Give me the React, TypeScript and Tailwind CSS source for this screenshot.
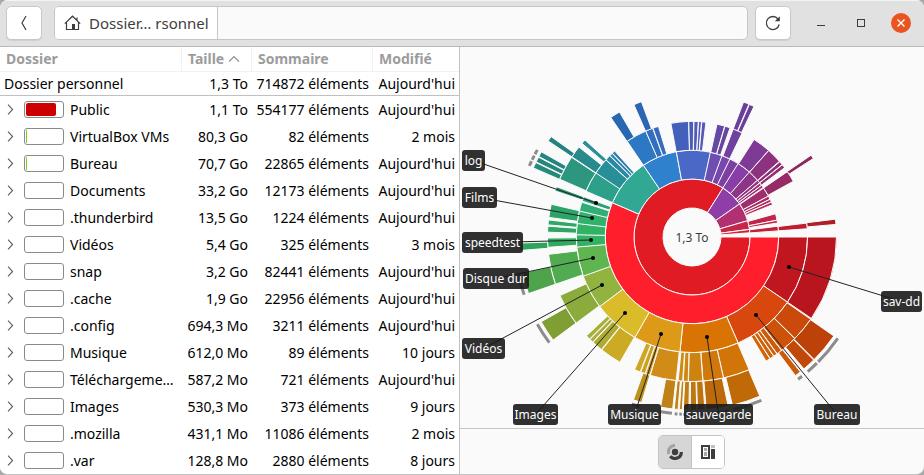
import React from "react";

type Row = { name: string; size: string; count: string; date: string; fill?: string };

const rows: Row[] = [
  { name: "Public", size: "1,1 To", count: "554177 éléments", date: "Aujourd'hui", fill: "w-[30px] bg-[#cc0000]" },
  { name: "VirtualBox VMs", size: "80,3 Go", count: "82 éléments", date: "2 mois", fill: "w-px bg-[#73d216]" },
  { name: "Bureau", size: "70,7 Go", count: "22865 éléments", date: "Aujourd'hui", fill: "w-px bg-[#73d216]" },
  { name: "Documents", size: "33,2 Go", count: "12173 éléments", date: "Aujourd'hui" },
  { name: ".thunderbird", size: "13,5 Go", count: "1224 éléments", date: "Aujourd'hui" },
  { name: "Vidéos", size: "5,4 Go", count: "325 éléments", date: "3 mois" },
  { name: "snap", size: "3,2 Go", count: "82441 éléments", date: "Aujourd'hui" },
  { name: ".cache", size: "1,9 Go", count: "22956 éléments", date: "Aujourd'hui" },
  { name: ".config", size: "694,3 Mo", count: "3211 éléments", date: "Aujourd'hui" },
  { name: "Musique", size: "612,0 Mo", count: "89 éléments", date: "10 jours" },
  { name: "Téléchargeme…", size: "587,2 Mo", count: "721 éléments", date: "Aujourd'hui" },
  { name: "Images", size: "530,3 Mo", count: "373 éléments", date: "9 jours" },
  { name: ".mozilla", size: "431,1 Mo", count: "11086 éléments", date: "2 mois" },
  { name: ".var", size: "128,8 Mo", count: "2880 éléments", date: "8 jours" },
];

const radii = [29, 58, 86.7, 115.6, 144.5, 173];

// [ring, start angle, end angle, colour]; angles run clockwise from east
const sectors: [number, number, number, string][] = [
  [0, 0, 302.3, "#e01b24"],
  [0, 302.3, 325.2, "#8e3ea6"],
  [0, 325.2, 343.7, "#b13071"],
  [0, 343.7, 352.3, "#c62648"],
  [0, 352.5, 355.8, "#d9203a"],

  [1, 0, 203.3, "#ff1f2c"],
  [1, 203.3, 235.9, "#30a893"],
  [1, 235.9, 259.6, "#3081cd"],
  [1, 259.6, 282.4, "#4a69c6"],
  [1, 282.4, 290.4, "#6d4fb3"],
  [1, 290.4, 296.1, "#7747ab"],
  [1, 296.1, 302.3, "#7d40a2"],
  [1, 302.3, 311.6, "#883ea6"],
  [1, 311.6, 319, "#8e3588"],
  [1, 319.3, 321.2, "#96327f"],
  [1, 321.6, 323.2, "#9a3079"],
  [1, 323.6, 325, "#9d2f74"],
  [1, 325.8, 331.7, "#a02d6e"],
  [1, 332, 334, "#ac2a63"],
  [1, 334.4, 336, "#b02960"],
  [1, 336.4, 338, "#b9275a"],
  [1, 344.6, 348.6, "#c1244a"],
  [1, 349, 350.5, "#c22346"],
  [1, 353, 355.8, "#c32038"],

  [2, 0, 34.3, "#c01620"],
  [2, 34.3, 66.5, "#d8470e"],
  [2, 66.5, 96, "#d97404"],
  [2, 96, 119.6, "#dd9a18"],
  [2, 119.6, 143, "#dabb29"],
  [2, 143, 160.3, "#93b340"],
  [2, 160.3, 175.1, "#5fb651"],
  [2, 175.1, 181.2, "#33b164"],
  [2, 181.2, 186.8, "#31b366"],
  [2, 186.8, 193.1, "#31b16c"],
  [2, 193.1, 197.4, "#2fae75"],
  [2, 198.2, 200.3, "#2a9f78"],
  [2, 203.5, 213.8, "#2da089"],
  [2, 213.8, 221.7, "#288f99"],
  [2, 222, 224.5, "#2a89a5"],
  [2, 224.9, 226.2, "#2b83ac"],
  [2, 226.6, 227.9, "#2c7fb1"],
  [2, 236, 246.3, "#2d78c2"],
  [2, 246.5, 250, "#326fbf"],
  [2, 250.4, 253, "#386bbf"],
  [2, 259.6, 268.2, "#4560bb"],
  [2, 268.5, 270.7, "#4b5cb8"],
  [2, 271.1, 273, "#505bb8"],
  [2, 273.4, 274.6, "#535ab7"],
  [2, 275, 276.8, "#5558b5"],
  [2, 282.6, 286.3, "#6549a5"],
  [2, 286.7, 289.1, "#68469f"],
  [2, 291, 295.6, "#6e439f"],
  [2, 302.6, 311.4, "#7e3a95"],
  [2, 311.7, 319, "#8c3281"],
  [2, 319.5, 321.1, "#912e74"],
  [2, 321.5, 323.1, "#962c6f"],
  [2, 325.7, 331.1, "#962b67"],
  [2, 353.2, 355.8, "#be1e31"],

  [3, 0, 34.3, "#b9151f"],
  [3, 34.8, 44.5, "#cb4a0b"],
  [3, 44.8, 51.5, "#cc520a"],
  [3, 51.8, 53.8, "#ce5b08"],
  [3, 54.1, 55.4, "#d05f08"],
  [3, 55.7, 57.2, "#d16208"],
  [3, 57.5, 59.1, "#d36507"],
  [3, 66.8, 77.3, "#d17508"],
  [3, 77.5, 85.5, "#d0780c"],
  [3, 85.8, 91.3, "#cf830f"],
  [3, 91.6, 93.4, "#cf8813"],
  [3, 93.8, 95.4, "#cf8b14"],
  [3, 96.4, 106.7, "#d08c17"],
  [3, 107, 108.7, "#cc9a20"],
  [3, 109, 110.7, "#cda020"],
  [3, 111.1, 113.3, "#cda624"],
  [3, 120, 128.5, "#cbaa24"],
  [3, 128.9, 133.1, "#aeab33"],
  [3, 133.5, 134.8, "#aaae38"],
  [3, 135.2, 136.8, "#a8af39"],
  [3, 143.5, 156, "#8bab3c"],
  [3, 161, 173, "#51ab50"],
  [3, 176, 179.5, "#32ab62"],
  [3, 182, 184.2, "#2fa565"],
  [3, 184.9, 186.7, "#2ea767"],
  [3, 187.9, 193, "#2ba468"],
  [3, 198.7, 200.3, "#269573"],
  [3, 203.7, 213.4, "#2c967e"],
  [3, 213.8, 218.4, "#288a8c"],
  [3, 220.5, 222.1, "#2b8f9b"],
  [3, 235.9, 239.8, "#2868b0"],
  [3, 246.4, 249.4, "#2c65b1"],
  [3, 291, 293.1, "#683f9a"],
  [3, 293.5, 295.3, "#6a3f98"],
  [3, 325.6, 327, "#8c275f"],
  [3, 353, 354.9, "#af1c2c"],

  [4, 35, 45, "#bd4209"],
  [4, 45.4, 49.6, "#c0490a"],
  [4, 51.3, 53.2, "#cc5a0b"],
  [4, 67, 76.4, "#c06907"],
  [4, 78, 85.2, "#bd6b0a"],
  [4, 85.8, 88.1, "#bd7410"],
  [4, 88.5, 90.5, "#bd7810"],
  [4, 91.1, 92.8, "#bf7d13"],
  [4, 93.3, 94.1, "#c08012"],
  [4, 94.7, 95.8, "#c08212"],
  [4, 96.5, 100.4, "#bf8218"],
  [4, 107, 109.7, "#bc911e"],
  [4, 143.5, 150.6, "#7f9e34"],
  [4, 161, 168, "#4da44b"],
  [4, 175.6, 177.9, "#30a35c"],
  [4, 203.6, 205.4, "#25897b"],
  [4, 205.8, 207.4, "#24877d"],
  [4, 207.8, 209.4, "#258580"],
  [4, 213.8, 215.4, "#248381"],
];

// Folders that go deeper than the last ring
const deeper: [number, number][] = [
  [34.8, 44.7], [45.3, 49.3], [51.7, 53.3], [67, 76.6], [78, 85.2], [85.8, 90.5], [91, 92.8],
  [93.3, 94.1], [94.7, 95.6], [96.5, 100.4], [107, 109.8], [143.5, 150.6], [161, 168],
  [203.6, 205.3], [205.8, 207.3], [207.8, 209.4],
];

// name, box x, box y, box width, target x, target y (all from the chart's centre)
const labels: [string, number, number, number, number, number][] = [
  ["log", -230, -87, 23, -96, -34],
  ["Films", -230, -50, 35, -100, -19],
  ["speedtest", -230, -5, 61, -101, 3],
  ["Disque dur", -229, 31, 66, -99, 21],
  ["Vidéos", -230, 101, 43, -90, 48],
  ["Images", -179, 167, 45, -67, 76],
  ["Musique", -84, 167, 53, -31, 97],
  ["sauvegarde", -8, 167, 69, 15, 100],
  ["Bureau", 122, 167, 46, 64, 78],
  ["sav-dd", 189, 54, 41, 97, 30],
];

function point(r: number, deg: number) {
  const a = (deg * Math.PI) / 180;
  return `${(r * Math.cos(a)).toFixed(2)} ${(r * Math.sin(a)).toFixed(2)}`;
}

function sectorPath(ring: number, start: number, end: number) {
  const a = radii[ring];
  const b = radii[ring + 1];
  // narrow slices grow a little, so that their outline does not eat them up
  const pad = ring > 0 && end - start < 15 ? 14 / b : 0;
  const from = start - pad;
  const to = end + pad;
  const large = to - from > 180 ? 1 : 0;
  return `M${point(a, from)}L${point(b, from)}A${b} ${b} 0 ${large} 1 ${point(b, to)}L${point(a, to)}A${a} ${a} 0 ${large} 0 ${point(a, from)}Z`;
}

function Rings() {
  return (
    <svg viewBox="-232 -190 464 381" className="h-full w-full" role="img" aria-label="Dossier personnel, 1,3 To">
      {sectors.map(([ring, from, to, color], i) => (
        <path key={i} d={sectorPath(ring, from, to)} fill={color} stroke="#fafafa" strokeWidth="1" />
      ))}
      {deeper.map(([from, to], i) => (
        <path key={i} d={`M${point(177.5, from)}A177.5 177.5 0 0 1 ${point(177.5, to)}`} fill="none" stroke="#8c8c8c" strokeWidth="3" />
      ))}
      <text x="0" y="5" textAnchor="middle" className="fill-[#3d3d3d] text-[12px]">1,3 To</text>
      {labels.map(([name, x, y, w, tx, ty]) => (
        <g key={name}>
          <line x1={tx} y1={ty} x2={x + w / 2} y2={y + 10.5} stroke="#222" strokeWidth="1" />
          <circle cx={tx} cy={ty} r="2" fill="#000" />
        </g>
      ))}
      {labels.map(([name, x, y, w]) => (
        <g key={name}>
          <rect x={x} y={y} width={w} height="21" rx="3" fill="#1a1a1a" fillOpacity="0.9" />
          <text x={x + w / 2} y={y + 15} textAnchor="middle" className="fill-white text-[12px]">{name}</text>
        </g>
      ))}
    </svg>
  );
}

function HeaderBar() {
  return (
    <header className="flex h-[47px] shrink-0 items-center border-b border-[#b9b9b9] bg-[#e1e1e1] pr-[13px] pl-[6px] shadow-[inset_0_1px_0_#f4f4f4]">
      <button aria-label="Retour" className="flex h-[34px] w-9 items-center justify-center rounded-[5px] border border-[#c8c8c8] bg-white shadow-[0_1px_1px_#cfcfcf]">
        <svg width="16" height="16" viewBox="0 0 16 16" fill="none" stroke="#3d3d3d" strokeWidth="1.2"><path d="M10 1 6 8l4 7" /></svg>
      </button>
      <div className="ml-3 flex h-[34px] flex-1 overflow-hidden rounded-[5px] border border-[#c6c6c6] bg-[#fafafa]">
        <button className="flex w-[163px] items-center gap-2 border-r border-[#c6c6c6] bg-white pl-[9px] text-[15px] whitespace-nowrap text-[#3d3d3d]">
          <svg width="17" height="16" viewBox="0 0 17 16" fill="none" stroke="#3d3d3d">
            <path d="M.8 8.6 8.5 1.2l7.7 7.4M2.5 7.5v7h12v-7M13 5V2.5" strokeWidth="1.2" />
            <path d="M8 9h3v5.5H8z" fill="#3d3d3d" stroke="none" />
          </svg>
          Dossier… rsonnel
        </button>
      </div>
      <button aria-label="Actualiser" className="ml-[7px] flex h-[34px] w-9 items-center justify-center rounded-[5px] border border-[#c8c8c8] bg-white shadow-[0_1px_1px_#cfcfcf]">
        <svg width="16" height="16" viewBox="0 0 16 16" fill="none" stroke="#3d3d3d" strokeWidth="1.3">
          <path d="M14.2 9.5A6.5 6.5 0 1 1 13 4" />
          <path d="M14.8 1.2v5H9.8z" fill="#3d3d3d" stroke="none" />
        </svg>
      </button>
      <div className="ml-5 flex items-center gap-5">
        <button aria-label="Réduire" className="flex size-5 items-center justify-center"><span className="mt-[5px] h-px w-2 bg-[#3d3d3d]" /></button>
        <button aria-label="Agrandir" className="flex size-5 items-center justify-center"><span className="size-2 border border-[#3d3d3d]" /></button>
        <button aria-label="Fermer" className="flex size-5 items-center justify-center rounded-full bg-[#e95420]">
          <svg width="8" height="8" viewBox="0 0 8 8" stroke="#fff" strokeWidth="1.4"><path d="m.5.5 7 7m0-7-7 7" /></svg>
        </button>
      </div>
    </header>
  );
}

function FolderTable() {
  return (
    <table className="w-full table-fixed border-separate border-spacing-0 text-[14px] leading-5 whitespace-nowrap text-black">
      <colgroup>
        <col />
        <col className="w-[70px]" />
        <col className="w-[121px]" />
        <col className="w-[86px]" />
      </colgroup>
      <thead>
        <tr className="h-[25px] text-left text-[#9c9c9c]">
          <th className="border-r border-b border-[#f1f1f1] p-0 pl-[6px]">Dossier</th>
          <th className="border-r border-b border-[#f1f1f1] p-0 pl-[6px]">
            <button className="flex items-center gap-1 font-bold">
              Taille
              <svg width="12" height="8" viewBox="0 0 12 8" fill="none" stroke="#8f8f8f" strokeWidth="1.1"><path d="m1 6.5 5-5 5 5" /></svg>
            </button>
          </th>
          <th className="border-r border-b border-[#f1f1f1] p-0 pl-[6px]">Sommaire</th>
          <th className="border-b border-[#f1f1f1] p-0 pl-[6px]">Modifié</th>
        </tr>
      </thead>
      <tbody>
        <tr className="h-6 text-right">
          <td className="border-b border-[#c0c0c0] p-0 pl-1 text-left">Dossier personnel</td>
          <td className="border-b border-[#c0c0c0] p-0 pr-1">1,3 To</td>
          <td className="border-b border-[#c0c0c0] p-0 pr-1">714872 éléments</td>
          <td className="border-b border-[#c0c0c0] p-0 pr-1">Aujourd'hui</td>
        </tr>
        {rows.map((row) => (
          <tr key={row.name} className="h-[27px] text-right">
            <td className="p-0">
              <div className="flex items-center pl-[6px]">
                <svg width="9" height="11" viewBox="0 0 9 11" fill="none" stroke="#5e5e5e" strokeWidth="1.1" className="shrink-0"><path d="m2 .7 4.6 4.8L2 10.300" /></svg>
                <span className="ml-[9px] flex h-[17px] w-10 shrink-0 rounded-[3px] border border-[#8a8a8a] bg-white p-px">
                  {row.fill && <span className={`rounded-[2px] ${row.fill}`} />}
                </span>
                <span className="ml-[6px]">{row.name}</span>
              </div>
            </td>
            <td className="p-0 pr-1">{row.size}</td>
            <td className="p-0 pr-1">{row.count}</td>
            <td className="p-0 pr-1">{row.date}</td>
          </tr>
        ))}
      </tbody>
    </table>
  );
}

export default function App() {
  return (
    <div className="h-screen bg-[#a8a8a8] font-['Noto_Sans','Open_Sans',sans-serif]">
      <div className="flex h-full flex-col overflow-hidden rounded-lg border-b border-[#c4c4c4] bg-[#fafafa]">
        <HeaderBar />
        <main className="flex min-h-0 flex-1">
          <section className="w-[460px] shrink-0 overflow-hidden border-r border-[#c0c0c0] bg-white">
            <FolderTable />
          </section>
          <section className="flex min-w-0 flex-1 flex-col">
            <div className="min-h-0 flex-1"><Rings /></div>
            <footer className="flex h-[46px] shrink-0 items-center justify-center border-t border-[#c6c6c6] pr-px">
              <div className="flex h-[34px] overflow-hidden rounded-[5px] border border-[#c4c4c4]">
                <button aria-label="Anneaux" aria-pressed="true" className="flex w-[33px] items-center justify-center border-r border-[#c4c4c4] bg-[#d6d6d6]">
                  <svg width="16" height="16" viewBox="0 0 16 16" fill="none">
                    <path d="M1.800 10A6.300 6.300 0 0 1 8 1.600" stroke="#a3a3a3" strokeWidth="3" />
                    <circle cx="8" cy="8" r="3.200" fill="#3d3d3d" />
                    <path d="M14.300 8A6.300 6.300 0 0 1 3.200 12.200" stroke="#3d3d3d" strokeWidth="3.200" />
                  </svg>
                </button>
                <button aria-label="Blocs" aria-pressed="false" className="flex w-8 items-center justify-center bg-white">
                  <svg width="16" height="16" viewBox="0 0 16 16">
                    <path d="M1 1h9v14H1z" fill="#3d3d3d" />
                    <path d="M3 3h5v10H3z" fill="#fff" />
                    <path d="M4 4h3v3H4zM4 8h3v4H4z" fill="#a9a9a9" />
                    <path d="M11 1h4v3h-4z" fill="#c0c0c0" />
                    <path d="M11 5h4v10h-4z" fill="#3d3d3d" />
                  </svg>
                </button>
              </div>
            </footer>
          </section>
        </main>
      </div>
    </div>
  );
}
